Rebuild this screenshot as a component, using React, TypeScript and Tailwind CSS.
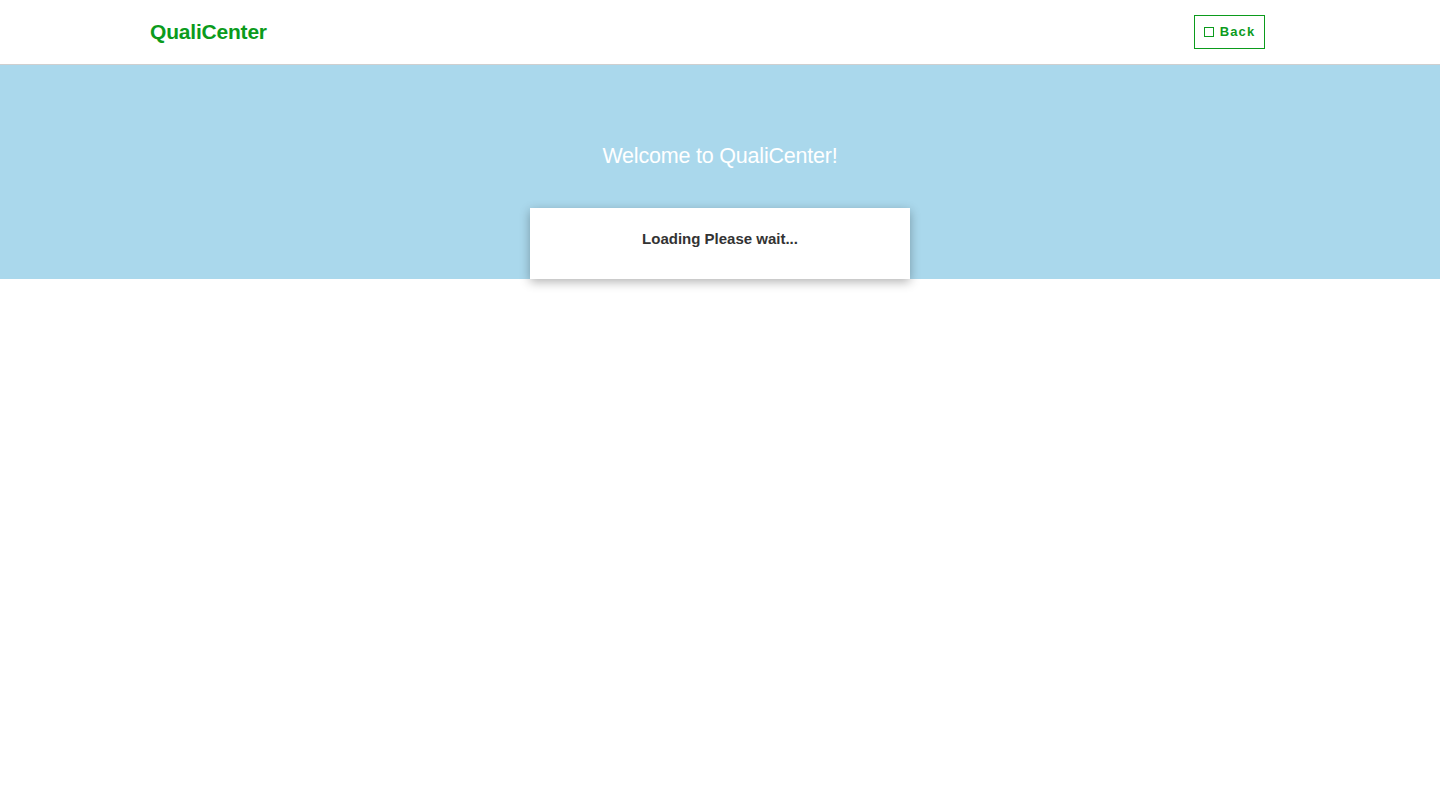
export default function App() {
  return (
    <div className="min-h-[786px] bg-white font-['Liberation_Sans',Arial,sans-serif]">
      <header className="h-[65px] border-b border-[#cfcfcf] flex items-center justify-between pl-[150px] pr-[175px]">
        <div className="text-[21px] font-bold text-[#0b9b1c] tracking-[-0.2px]">QualiCenter</div>
        <button className="h-[34px] w-[71px] border border-[#0b9b1c] flex items-center justify-center gap-[6px] text-[13px] font-bold text-[#0b9b1c] tracking-[1.1px] -mt-[1px]">
          <span className="inline-block w-[10px] h-[10px] border border-[#0b9b1c]" />
          Back
        </button>
      </header>
      <section className="bg-[#aad8ec] h-[214px] flex flex-col items-center">
        <h1 className="mt-[79px] text-[21.5px] leading-[24px] text-white tracking-[-0.2px]">Welcome to QualiCenter!</h1>
        <div className="mt-[40px] w-[380px] h-[71px] shrink-0 bg-white shadow-[0_3px_10px_rgba(0,0,0,0.3)] flex justify-center pt-[22px]">
          <span className="text-[15px] leading-[17px] font-bold text-[#333]">Loading Please wait...</span>
        </div>
      </section>
    </div>
  );
}
